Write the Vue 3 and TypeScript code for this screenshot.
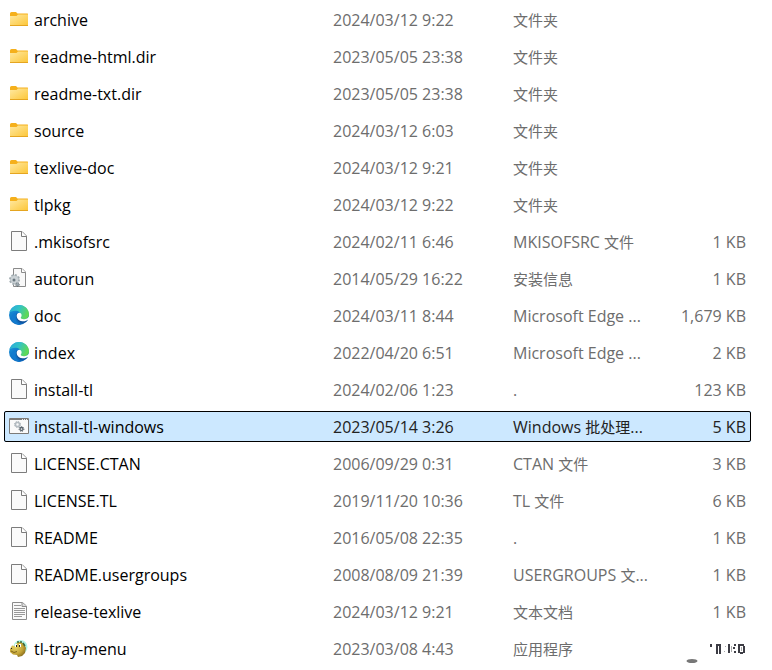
<script setup lang="ts">
type IconKind = 'folder' | 'file' | 'setup' | 'edge' | 'batch' | 'text' | 'app'

interface Entry {
  icon: IconKind
  name: string
  date: string
  type: string
  size: string
  selected?: boolean
  worn?: boolean
}

const entries: Entry[] = [
  { icon: 'folder', name: 'archive', date: '2024/03/12 9:22', type: '文件夹', size: '' },
  { icon: 'folder', name: 'readme-html.dir', date: '2023/05/05 23:38', type: '文件夹', size: '' },
  { icon: 'folder', name: 'readme-txt.dir', date: '2023/05/05 23:38', type: '文件夹', size: '' },
  { icon: 'folder', name: 'source', date: '2024/03/12 6:03', type: '文件夹', size: '' },
  { icon: 'folder', name: 'texlive-doc', date: '2024/03/12 9:21', type: '文件夹', size: '' },
  { icon: 'folder', name: 'tlpkg', date: '2024/03/12 9:22', type: '文件夹', size: '' },
  { icon: 'file', name: '.mkisofsrc', date: '2024/02/11 6:46', type: 'MKISOFSRC 文件', size: '1 KB' },
  { icon: 'setup', name: 'autorun', date: '2014/05/29 16:22', type: '安装信息', size: '1 KB' },
  { icon: 'edge', name: 'doc', date: '2024/03/11 8:44', type: 'Microsoft Edge ...', size: '1,679 KB' },
  { icon: 'edge', name: 'index', date: '2022/04/20 6:51', type: 'Microsoft Edge ...', size: '2 KB' },
  { icon: 'file', name: 'install-tl', date: '2024/02/06 1:23', type: '.', size: '123 KB' },
  { icon: 'batch', name: 'install-tl-windows', date: '2023/05/14 3:26', type: 'Windows 批处理...', size: '5 KB', selected: true },
  { icon: 'file', name: 'LICENSE.CTAN', date: '2006/09/29 0:31', type: 'CTAN 文件', size: '3 KB' },
  { icon: 'file', name: 'LICENSE.TL', date: '2019/11/20 10:36', type: 'TL 文件', size: '6 KB' },
  { icon: 'file', name: 'README', date: '2016/05/08 22:35', type: '.', size: '1 KB' },
  { icon: 'file', name: 'README.usergroups', date: '2008/08/09 21:39', type: 'USERGROUPS 文...', size: '1 KB' },
  { icon: 'text', name: 'release-texlive', date: '2024/03/12 9:21', type: '文本文档', size: '1 KB' },
  { icon: 'app', name: 'tl-tray-menu', date: '2023/03/08 4:43', type: '应用程序', size: '', worn: true },
]

// Splits a type label into Latin and Han runs, which are set at different sizes.
const runs = (text: string) =>
  text.split(/([\u4e00-\u9fff]+)/).filter(Boolean).map((part) => ({ part, han: /[\u4e00-\u9fff]/.test(part) }))
</script>

<template>
  <svg class="defs" aria-hidden="true">
    <defs>
      <linearGradient id="folder-front" x1="0" y1="0" x2="1" y2="1">
        <stop offset="0" stop-color="#ffe9a2" />
        <stop offset="1" stop-color="#fcc638" />
      </linearGradient>
      <linearGradient id="edge-top" x1="0" y1="0" x2="1" y2="0.4">
        <stop offset="0" stop-color="#2aa7dc" />
        <stop offset="0.5" stop-color="#32c3c6" />
        <stop offset="1" stop-color="#5fd957" />
      </linearGradient>
      <linearGradient id="edge-left" x1="0" y1="0" x2="0.5" y2="1">
        <stop offset="0" stop-color="#1b9be0" />
        <stop offset="1" stop-color="#0c63b8" />
      </linearGradient>
      <radialGradient id="app-face" cx="0.35" cy="0.35" r="0.75">
        <stop offset="0" stop-color="#e5d36b" />
        <stop offset="0.6" stop-color="#c5a536" />
        <stop offset="1" stop-color="#80651b" />
      </radialGradient>
    </defs>
  </svg>
  <table class="files">
    <colgroup>
      <col />
      <col class="col-date" />
      <col class="col-type" />
      <col class="col-size" />
    </colgroup>
    <tbody>
      <tr v-for="e in entries" :key="e.name" :class="{ selected: e.selected }">
        <td class="name">
          <div class="label">
            <svg class="icon" viewBox="0 0 20 20" aria-hidden="true">
              <g v-if="e.icon === 'folder'">
                <path d="M1 4.500Q1 3 2.500 3H7L8.500 4.500H18.500Q19 4.500 19 5V9H1Z" fill="#f5b01c" />
                <path d="M1 7H7.500L9 5.500H19V16.500H1Z" fill="url(#folder-front)" />
                <path d="M1 16.500H19" stroke="#e5a520" />
              </g>
              <g v-else-if="e.icon === 'file'">
                <path d="M2.500 .5H13L17.500 5V19.500H2.500Z" fill="#fafafa" stroke="#7c7c7c" />
                <path d="M12.500 .5V5.500H17.500" fill="#fff" stroke="#7c7c7c" />
              </g>
              <g v-else-if="e.icon === 'setup'">
                <path d="M4.500 .5H13L16.500 4V18.500H4.500Z" fill="#f8f8f8" stroke="#8a8a8a" />
                <path d="M12.500 .5V4.500H16.500" fill="#fff" stroke="#8a8a8a" />
                <circle cx="5.500" cy="11.500" r="4.500" fill="#c4ccd0" stroke="#a3adb2" stroke-width="2" stroke-dasharray="2 1.500" />
                <circle cx="5.500" cy="11.500" r="3.600" fill="#cbd2d6" />
                <circle cx="5" cy="12" r="1.500" fill="#69767e" />
                <circle cx="8.500" cy="16.500" r="1.800" fill="#9da8ae" stroke="#59666e" stroke-dasharray="1 1" />
              </g>
              <g v-else-if="e.icon === 'edge'">
                <circle cx="10" cy="10" r="10" fill="url(#edge-left)" />
                <path d="M.3 8C1.500 3 5.500 0 10 0C16 0 20 4.500 20 9.300C20 12.500 17.500 14.500 14.500 14.500C12 14.500 11 13.500 11.300 12.600C13 10.500 11.500 6.200 7.400 5.800C4 5.500 1.300 6.500 .3 8Z" fill="url(#edge-top)" />
                <path d="M7.700 8.500C4.500 12 6.500 18.500 12.500 19.600C8 20.500 3.500 18 2.700 13C2.400 9.500 4.500 7.500 7.700 7.500Z" fill="#127bce" />
                <path d="M7.800 8.200C5.600 12.500 9 18.500 14.500 17.800C16.700 17.500 18 16.500 18.900 14.800C16 17 10.500 15.800 11.500 12.500Z" fill="#11539c" />
                <path d="M12 8.500C10.500 7 8 8 7.700 10.500C7.500 13.500 10 16 13.200 16.200C15.800 16.400 18 15.500 19.200 14.400L20 15.500V11.500C19 13.300 17.200 14.300 15 14.300C12.800 14.300 11.600 13.500 11.800 12.600C12.800 11.400 12.900 9.700 12 8.500Z" fill="#fff" />
              </g>
              <g v-else-if="e.icon === 'batch'">
                <path d="M.5 2.500H19.500V17.500H.5Z" fill="#fafafa" stroke="#7d7b78" />
                <path d="M1 3.500H19" stroke="#7d7b78" />
                <path d="M13 3.500H18" stroke="#eee" stroke-dasharray="1 1" />
                <circle cx="8.500" cy="8.500" r="2" fill="none" stroke="#b4bcc2" stroke-width="1.500" />
                <circle cx="8.500" cy="8.500" r="3" fill="none" stroke="#a4adb3" stroke-dasharray="1.350 1" />
                <circle cx="12.500" cy="13" r="1.500" fill="none" stroke="#59646d" stroke-width="1.300" />
                <circle cx="12.500" cy="13" r="2.400" fill="none" stroke="#59646d" stroke-dasharray="1 .9" />
              </g>
              <g v-else-if="e.icon === 'text'">
                <path d="M3.500 1.500H13.500L17.500 5V18.500H3.500Z" fill="#fafafa" stroke="#8c8c8c" />
                <path d="M13 1.500V5.500H17.500" fill="#ddd" stroke="#8c8c8c" />
                <path d="M5 4.500H12M5 7.500H16M5 9.500H16M5 11.500H16M5 13.500H16M5 15.500H13" stroke="#999" />
              </g>
              <g v-else>
                <circle cx="11.500" cy="9" r="7" fill="#aff3e6" />
                <path d="M1 11L3 7.500L6 8L8 4.500L10 4L12 4L15 6L17 10L16 15L13 18L9 19L8 17L4 16.500L1 14Z" fill="url(#app-face)" />
                <path d="M8 4H10M11 4H13M14 5L16 8" stroke="#3c6940" stroke-width="1.500" />
                <path d="M6 6H8V9H6ZM10 6H12V9H10Z" fill="#fff" />
                <path d="M7 7H8V9H7ZM10 7H11V9H10ZM2 10H3V11H2Z" fill="#222" />
                <path d="M2 13L5 14.500L8 13.500" fill="none" stroke="#80651b" />
              </g>
            </svg>
            <span>{{ e.name }}</span>
          </div>
        </td>
        <td>{{ e.date }}</td>
        <td><span v-for="(r, i) in runs(e.type)" :key="i" :class="{ han: r.han }">{{ r.part }}</span></td>
        <td class="size">
          <svg v-if="e.worn" class="worn" viewBox="0 2 64 28" aria-hidden="true">
            <path d="M28 11H30V14H28ZM34 11H39V13H34ZM34 13H36V21H34ZM37 13H39V21H37ZM46 11H48V20H46ZM52 11H54V13H52ZM51 14H53V16H51ZM52 18H54V20H52ZM56 11H62V13H56ZM56 13H58V20H56ZM61 13H63V20H61ZM58 19H61V21H58Z" fill="#3c3c44" />
            <path d="M43 13H44V14H43ZM42 18H43V19H42ZM49 13H50V19H49ZM59 14H60V18H59Z" fill="#aaa" />
            <ellipse cx="10" cy="28" rx="5.500" ry="2" fill="#777" />
          </svg>
          <template v-else>{{ e.size }}</template>
        </td>
      </tr>
    </tbody>
  </table>
</template>

<style>
body {
  background: #fff;
}
#app {
  padding: 0 21px 0 4px;
}
</style>

<style scoped>
.defs {
  position: absolute;
  width: 0;
  height: 0;
}
.files {
  width: 100%;
  margin-top: -2px;
  table-layout: fixed;
  border-collapse: separate;
  border-spacing: 0 6px;
  font-family: "Open Sans", "Noto Sans CJK SC", sans-serif;
  font-size: 16px;
  line-height: 29px;
  color: #6d6d6d;
}
.col-date {
  width: 180px;
}
.col-type {
  width: 150px;
}
.col-size {
  width: 88px;
}
td {
  padding: 2px 0 0;
  white-space: nowrap;
  vertical-align: top;
}
.name {
  color: #000;
}
.label {
  display: flex;
  align-items: flex-start;
  gap: 5px;
  padding-left: 5px;
}
.icon {
  width: 20px;
  height: 20px;
  margin-top: 3px;
  flex: none;
}
.han {
  font-size: 15px;
  line-height: 1;
}
.size {
  padding-right: 5px;
  text-align: right;
}
.worn {
  display: block;
  width: 64px;
  height: 28px;
  margin-left: auto;
}
.selected {
  background: #cce8ff;
  color: #222;
  outline: 1px solid #000;
  outline-offset: -1px;
  border-radius: 2px;
}
</style>
